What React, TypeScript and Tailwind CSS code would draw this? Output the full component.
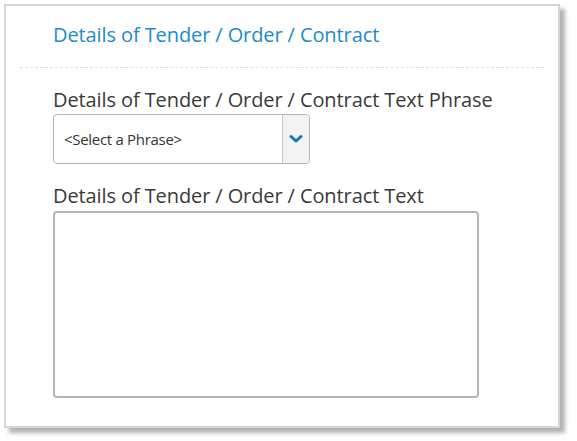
import React from "react";

export default function App() {
  return (
    <div className="w-[577px] h-[441px] bg-white pl-[4px] pt-[4px]" style={{ fontFamily: '"Open Sans", sans-serif' }}>
      <div className="w-[556px] h-[424px] bg-white border-2 border-[#d6d6d6] shadow-[5px_5px_4px_rgba(0,0,0,0.3)] px-[14px]">
        {/* header */}
        <div className="pl-[33px] pt-[16px] pb-[19px] border-b border-dashed border-[#dedede]">
          <h2 className="text-[20px] leading-[26px] tracking-[-0.1px] text-[#1b8bcc]">Details of Tender / Order / Contract</h2>
        </div>

        {/* phrase select */}
        <div className="pl-[33px] pt-[19px]">
          <label className="block text-[20px] leading-[26px] tracking-[-0.1px] text-[#3a3a3a]">
            Details of Tender / Order / Contract Text Phrase
          </label>
          <div className="mt-[1px] flex w-[257px] h-[50px] border border-[#b4b4b4] rounded-[4px] overflow-hidden">
            <div className="flex-1 flex items-center pl-[10px] text-[15px] tracking-[-0.3px] text-[#333]">&lt;Select a Phrase&gt;</div>
            <div className="w-[27px] flex items-center justify-center bg-[#f3f3f3] border-l border-[#c8c8c8]">
              <svg width="14" height="10" viewBox="0 0 14 10">
                <path d="M2 2.5 L7 7 L12 2.5" fill="none" stroke="#1577b8" strokeWidth="3" strokeLinecap="round" strokeLinejoin="round" />
              </svg>
            </div>
          </div>

          <label className="block mt-[19px] text-[20px] leading-[26px] tracking-[-0.1px] text-[#3a3a3a]">
            Details of Tender / Order / Contract Text
          </label>
          <textarea className="mt-[2px] block w-[426px] h-[187px] border-2 border-[#b4b4b4] rounded-[4px] resize-none outline-none" />
        </div>
      </div>
    </div>
  );
}
